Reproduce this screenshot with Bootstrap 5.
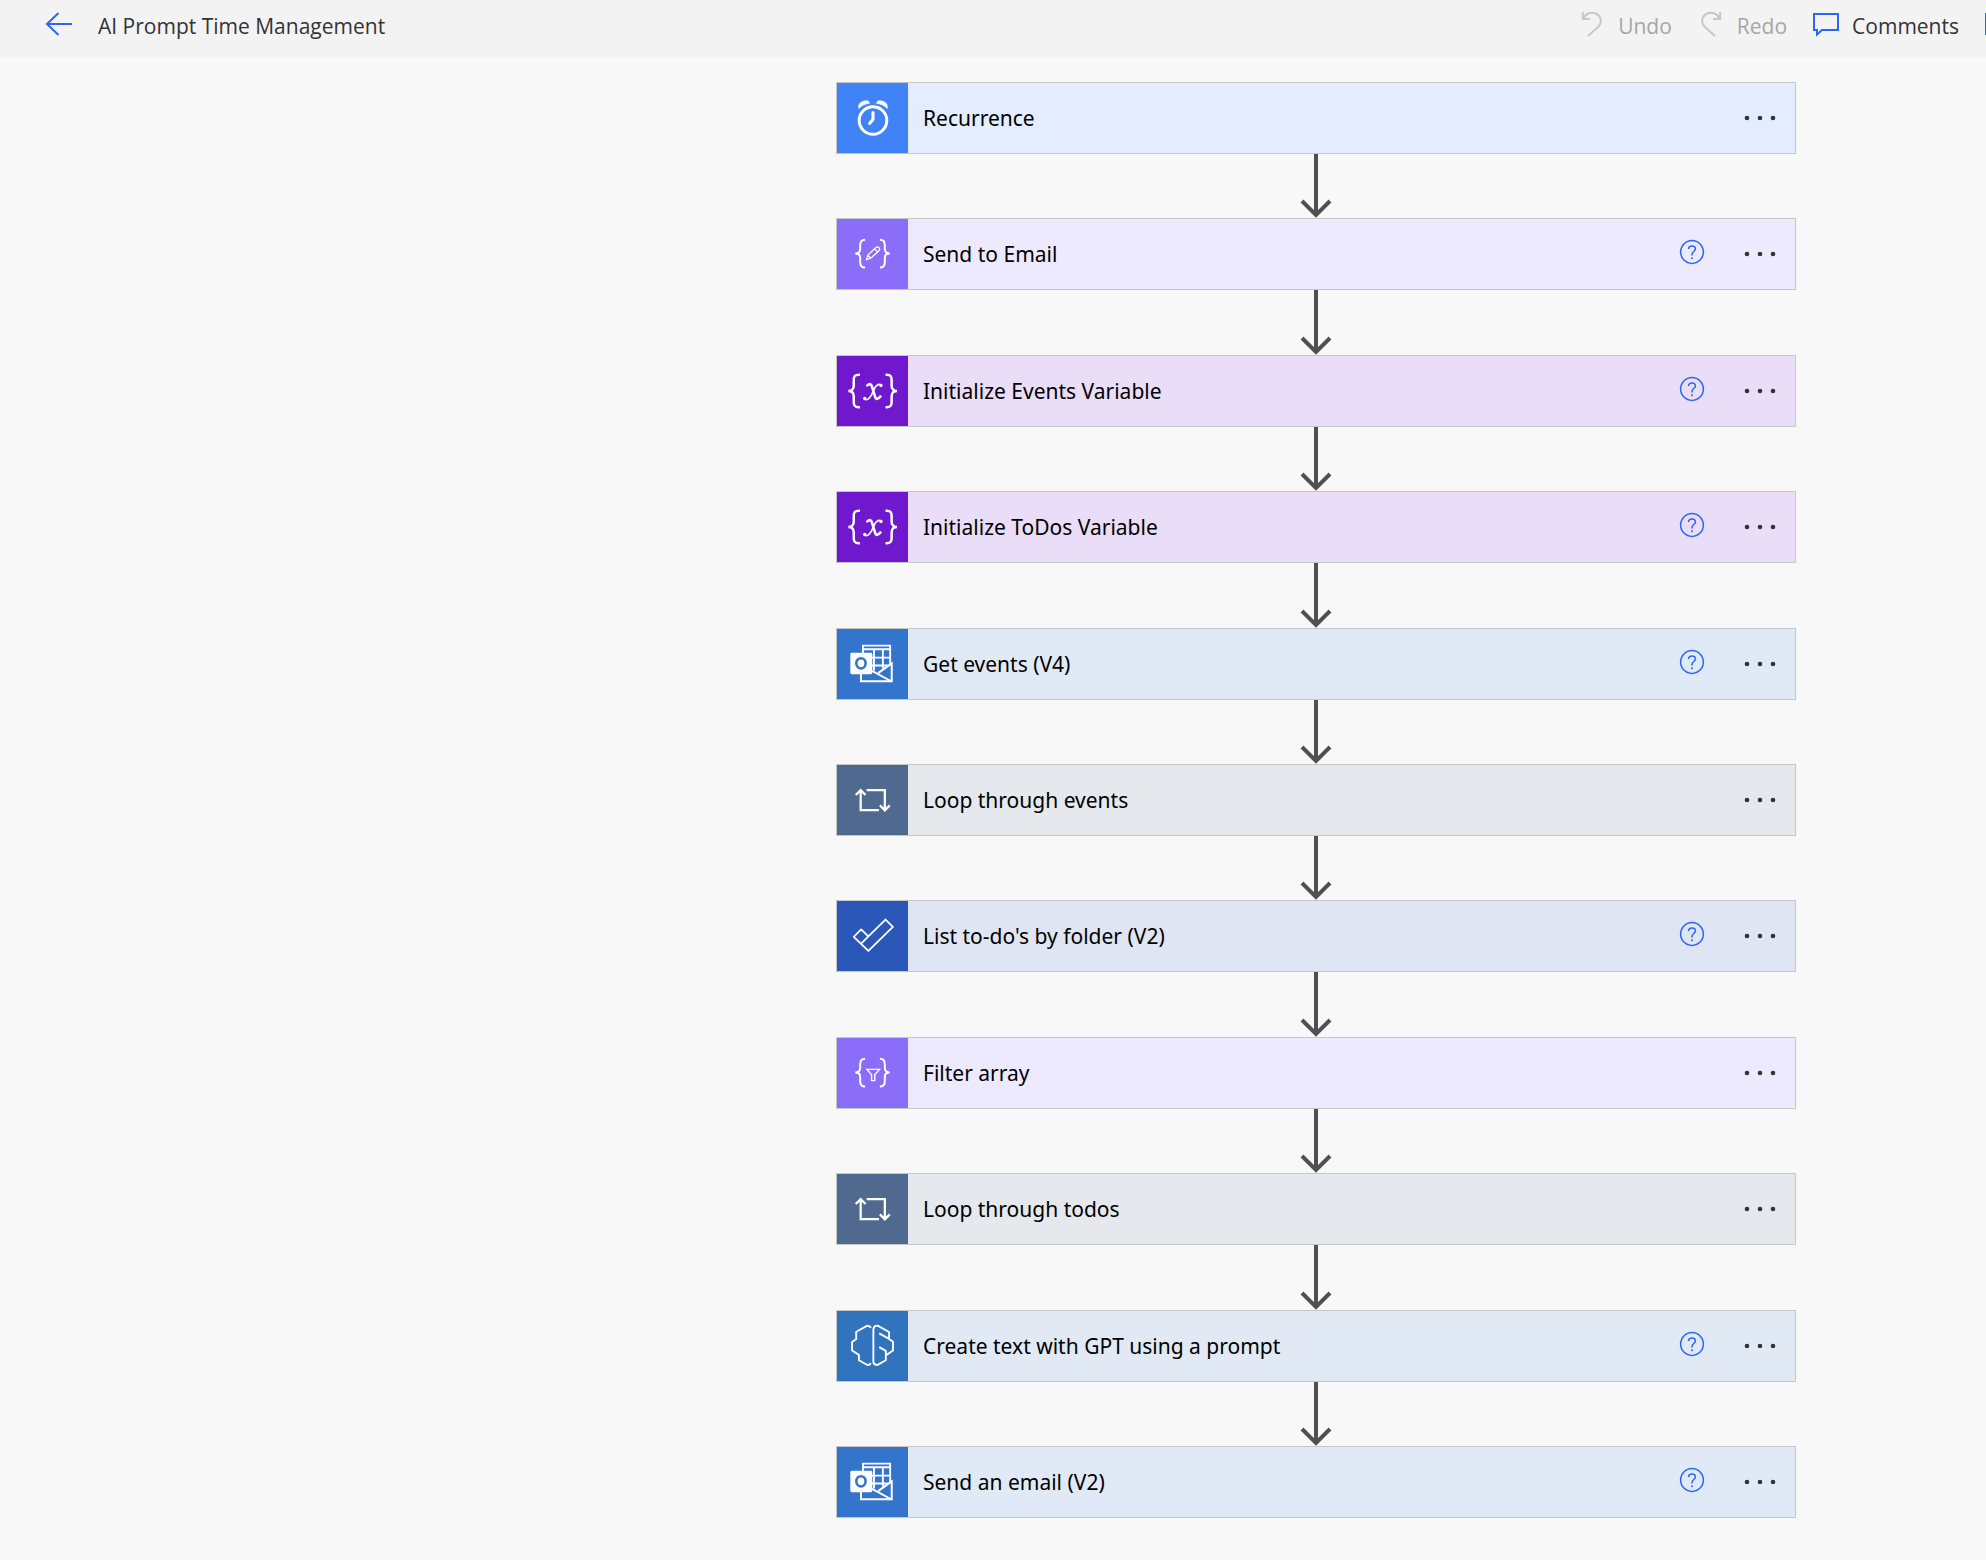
<!DOCTYPE html>
<html lang="en">
<head>
<meta charset="utf-8">
<meta name="viewport" content="width=device-width, initial-scale=1">
<title>AI Prompt Time Management</title>
<link href="https://cdn.jsdelivr.net/npm/bootstrap@5.3.0/dist/css/bootstrap.min.css" rel="stylesheet">
<style>
  body { background: #f8f8f8; color: #333; font-family: "Open Sans", "Noto Sans", sans-serif; }
  .topbar { height: 57px; background: #f3f3f3; padding: 0 0 6px 44px; }
  .topbar h1 { font-size: 21px; line-height: 28px; color: #333; }
  .tools { gap: 25px; margin-right: -26px; }
  .tool { gap: 12px; font-size: 21px; line-height: 28px; color: #333; }
  .tool:disabled { color: #a6a6a6; opacity: 1; }
  .line-icon { fill: none; stroke: #2a66f7; stroke-width: 2; margin-bottom: 4px; }
  .tool:disabled .line-icon { stroke: #c8c8c8; }
  .canvas { padding: 25px 0 42px 646px; }
  .flow { width: 960px; }
  .step { height: 72px; border: 1px solid #c6c6c6; background: var(--tint); font-family: "Noto Sans", sans-serif; }
  .tile { width: 71px; background: var(--tone); }
  .tile svg { display: block; width: 71px; height: 70px; fill: none; stroke: #fff; stroke-width: 2; }
  .step-name { padding-left: 15px; font-size: 21px; line-height: 28px; color: #000; }
  .step-tools { gap: 33px; padding-right: 13px; }
  .shaft { width: 4px; background: #505050; }
  .recur { --tone: #4083f7; --tint: #e3edff; }
  .dataop { --tone: #8a6df8; --tint: #ede9ff; }
  .vars { --tone: #6f18cd; --tint: #eaddf7; }
  .office { --tone: #3375cd; --tint: #e0eaf6; }
  .loop { --tone: #4f698f; --tint: #e5e8ec; }
  .todo { --tone: #2b58b8; --tint: #dfe5f3; }
  .ai { --tone: #3273be; --tint: #e1e9f5; }
</style>
<script src="https://cdn.jsdelivr.net/npm/bootstrap@5.3.0/dist/js/bootstrap.bundle.min.js"></script>
</head>
<body class="d-flex flex-column min-vh-100">

<svg class="d-none" aria-hidden="true">
  <symbol id="i-clock" viewBox="0 0 71 71">
    <circle cx="36" cy="38" r="14" stroke-width="3"/>
    <path d="M36 30V37L32.5 41" stroke-width="3.2" stroke-linecap="round" stroke-linejoin="round"/>
    <path d="M21.6 25.8C20.2 21 25 17.3 31 18.2Q32.2 18.8 32.4 20.6C27.6 21.3 24.5 23.2 21.6 25.8ZM50.4 25.8C51.8 21 47 17.3 41 18.2Q39.8 18.8 39.6 20.6C44.4 21.3 47.5 23.2 50.4 25.8Z" fill="#fff" stroke-width=".6"/>
  </symbol>
  <symbol id="i-braces" viewBox="0 0 71 71">
    <path d="M28 21C24 21 23 23 23 26.5V30.5C23 33.5 21.5 35 18 35C21.5 35 23 36.5 23 39.5V43.5C23 47 24 49.2 28 49.2M43 21C47 21 48 23 48 26.5V30.5C48 33.5 49.5 35 53 35C49.5 35 48 36.5 48 39.5V43.5C48 47 47 49.2 43 49.2"/>
  </symbol>
  <symbol id="i-compose" viewBox="0 0 71 71">
    <use href="#i-braces"/>
    <path d="M29.4 41.2L30.8 36.6L39.3 28.7Q40.8 27.8 42.1 29.1Q43.3 30.6 42.2 32L33.7 39.8ZM30.8 36.6L33.7 39.8M37.7 30.3L40.6 33.4" stroke-width="1.3"/>
  </symbol>
  <symbol id="i-filter" viewBox="0 0 71 71">
    <use href="#i-braces"/>
    <path d="M29.8 31.8H42.6L37.8 37.4V43.2H34.6V37.4Z" stroke-width="1.4"/>
  </symbol>
  <symbol id="i-var" viewBox="0 0 71 71">
    <path d="M22.7 19H21.5C17.5 19 16.5 20.5 16.5 24V30C16.5 33.5 14.5 35.5 11 35.5C14.5 35.5 16.5 37.5 16.5 41V47C16.5 50.5 17.5 52 21.5 52H22.7M48.7 19H49.9C53.9 19 54.9 20.5 54.9 24V30C54.9 33.5 56.9 35.5 60.4 35.5C56.9 35.5 54.9 37.5 54.9 41V47C54.9 50.5 53.9 52 49.9 52H48.7" stroke-width="2.5"/>
    <g stroke-linecap="round">
      <path d="M30.2 29.8Q33.8 26.8 35 31L38 41Q39.4 46 43.6 41" stroke-width="2.6"/>
      <path d="M44 29.2Q40.5 27.5 37.5 33L34.5 39.5Q31 46 27.5 43.6" stroke-width="1.6"/>
      <path d="M44 29.8H44.1M27.6 43.1H27.7" stroke-width="3.4"/>
    </g>
  </symbol>
  <symbol id="i-outlook" viewBox="0 0 71 71">
    <path d="M25.8 25V16.8H53.4V36M25.8 20.5H53.4M37 20.5V42M46 20.5V40M35 29H53.4M35 37H52" stroke-width="1.9"/>
    <path d="M23.8 45V53H55V35L41.5 44.5M35 42.5L54.5 53" stroke-width="2"/>
    <rect x="13" y="24" width="22.3" height="22" rx="1.5" fill="#fff" stroke="none"/>
    <ellipse cx="23.8" cy="34.8" rx="4.7" ry="5.2" stroke="#3375cd" stroke-width="2.6"/>
  </symbol>
  <symbol id="i-loop" viewBox="0 0 71 71">
    <path d="M18.5 30.5L23.5 25.5L28.5 30.5M23.5 26V45.8H42M29.5 25.5H48V45.5M43 41L48 46L53 41" stroke-width="2.3"/>
  </symbol>
  <symbol id="i-check" viewBox="0 0 71 71">
    <path d="M16.5 36.3L24 28.8L31.3 36L48.7 18.8L56.2 26.3L31.3 50.7ZM24 43.3L31.3 36" stroke-width="1.8" stroke-linejoin="round"/>
  </symbol>
  <symbol id="i-brain" viewBox="0 0 71 71">
    <path d="M34 17Q33 14.9 30.3 14.9L19 21V28.5L14.8 31.5V40L21.7 44.5V50L30.3 54.8Q33 54.8 33.8 53M36.4 18V52Q37 54.8 40.7 54.7L49 50V40.5L42.3 36.7M49 45L56.3 40V31.3L52.3 28.3L42.3 22.7M52.3 28.3V21.3L40.7 14.9Q37 14.8 36.4 18" stroke-width="1.9" stroke-linejoin="round"/>
  </symbol>
  <symbol id="i-help" viewBox="0 0 26 26">
    <circle cx="13" cy="13" r="11.4" fill="none" stroke="#2a66f7" stroke-width="1.5"/>
    <path d="M9.5 10Q9.7 7 13 7Q16.4 7 16.4 10C16.4 12.2 13 12.5 13 15.6V16.5" fill="none" stroke="#2a66f7" stroke-width="1.5"/>
    <circle cx="13" cy="19.2" r="1" fill="#2a66f7"/>
  </symbol>
  <symbol id="i-dots" viewBox="0 0 44 20">
    <g fill="#333"><circle cx="9" cy="10" r="2.3"/><circle cx="22" cy="10" r="2.3"/><circle cx="35" cy="10" r="2.3"/></g>
  </symbol>
  <symbol id="i-head" viewBox="0 0 34 20">
    <path d="M17 0V17M3 3L17 17L31 3" fill="none" stroke="#505050" stroke-width="4"/>
  </symbol>
</svg>

<header class="topbar d-flex align-items-center overflow-hidden flex-shrink-0">
  <a href="#" class="d-flex" aria-label="Back"><svg class="line-icon" width="30" height="28" viewBox="0 0 30 28"><path d="M28 14H3M14.5 3L3 14L14.5 25"/></svg></a>
  <h1 class="fw-normal text-nowrap mb-0 ms-4">AI Prompt Time Management</h1>
  <div class="tools d-flex ms-auto flex-shrink-0">
    <button class="tool btn border-0 p-0 d-flex align-items-center" disabled><svg class="line-icon" width="28" height="28" viewBox="0 0 28 28"><path d="M4.8 2V9H12M5 9C8 3 13.5 1.5 18 3.5C23.5 6.5 24.5 13 20 17L10 26"/></svg>Undo</button>
    <button class="tool btn border-0 p-0 d-flex align-items-center" disabled><svg class="line-icon" width="28" height="28" viewBox="0 0 28 28"><path d="M23.2 2V9H16M23 9C20 3 14.5 1.5 10 3.5C4.5 6.5 3.5 13 8 17L18 26"/></svg>Redo</button>
    <button class="tool btn border-0 p-0 d-flex align-items-center"><svg class="line-icon" width="28" height="28" viewBox="0 0 28 28"><path d="M2 4H26V20H10L5 24.5V20H2Z"/></svg>Comments</button>
    <button class="tool btn border-0 p-0 d-flex align-items-center" aria-label="Save"><svg class="line-icon" width="28" height="28" viewBox="0 0 28 28"><path d="M2 4H22L26 8V24H2Z"/></svg></button>
  </div>
</header>

<main class="canvas d-flex flex-column align-items-center flex-fill">
  <div class="flow d-flex flex-column flex-fill" id="flow"></div>
</main>

<script>
  const steps = [
    ["Recurrence", "recur", "clock", false],
    ["Send to Email", "dataop", "compose", true],
    ["Initialize Events Variable", "vars", "var", true],
    ["Initialize ToDos Variable", "vars", "var", true],
    ["Get events (V4)", "office", "outlook", true],
    ["Loop through events", "loop", "loop", false],
    ["List to-do's by folder (V2)", "todo", "check", true],
    ["Filter array", "dataop", "filter", false],
    ["Loop through todos", "loop", "loop", false],
    ["Create text with GPT using a prompt", "ai", "brain", true],
    ["Send an email (V2)", "office", "outlook", true]
  ];
  const link = `<div class="d-flex flex-column align-items-center flex-fill" aria-hidden="true">
      <div class="shaft flex-fill"></div><svg width="34" height="20"><use href="#i-head"/></svg></div>`;
  document.getElementById("flow").innerHTML = steps.map(([name, kind, icon, help]) =>
    `<section class="step ${kind} d-flex align-items-stretch flex-shrink-0">
      <div class="tile flex-shrink-0"><svg aria-hidden="true"><use href="#i-${icon}"/></svg></div>
      <div class="step-name align-self-center text-nowrap">${name}</div>
      <div class="step-tools d-flex align-items-center ms-auto">
        ${help ? `<button class="btn border-0 p-0 d-flex pb-1" aria-label="Help"><svg width="26" height="26"><use href="#i-help"/></svg></button>` : ""}
        <button class="btn border-0 p-0 d-flex" aria-label="More"><svg width="44" height="20"><use href="#i-dots"/></svg></button>
      </div>
    </section>`).join(link);
</script>
</body>
</html>
